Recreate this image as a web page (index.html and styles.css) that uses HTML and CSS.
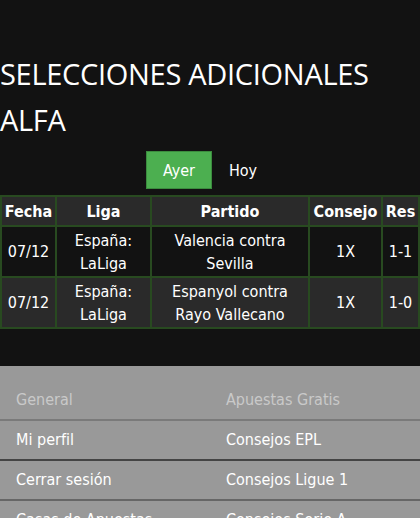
FILE: index.html
```html
<!DOCTYPE html>
<html lang="es">
<head>
<meta charset="utf-8">
<link rel="stylesheet" href="styles.css">
</head>
<body>
<main class="page">
  <h1 class="title">SELECCIONES ADICIONALES ALFA</h1>
  <div class="tabs">
    <button class="tab active">Ayer</button>
    <button class="tab">Hoy</button>
  </div>
  <table class="tips">
    <thead>
      <tr><th>Fecha</th><th>Liga</th><th>Partido</th><th>Consejo</th><th>Res</th></tr>
    </thead>
    <tbody>
      <tr class="odd"><td>07/12</td><td>España:<br>LaLiga</td><td>Valencia contra<br>Sevilla</td><td>1X</td><td>1-1</td></tr>
      <tr class="even"><td>07/12</td><td>España:<br>LaLiga</td><td>Espanyol contra<br>Rayo Vallecano</td><td>1X</td><td>1-0</td></tr>
    </tbody>
  </table>
</main>
<footer class="footer">
  <ul class="col">
    <li class="head">General</li>
    <li class="b-dark">Mi perfil</li>
    <li class="b-mid">Cerrar sesión</li>
    <li>Casas de Apuestas</li>
  </ul>
  <ul class="col">
    <li class="head">Apuestas Gratis</li>
    <li class="b-dark">Consejos EPL</li>
    <li class="b-mid">Consejos Ligue 1</li>
    <li>Consejos Serie A</li>
  </ul>
</footer>
</body>
</html>
```
FILE: styles.css
```css
html, body {
  margin: 0;
  padding: 0;
  background: #121212;
  color: #fff;
  overflow: hidden;
}
.page {
  padding-top: 51px;
  padding-bottom: 37px;
}
.title {
  margin: 0 0 8px 0;
  font-family: "Open Sans", sans-serif;
  font-weight: 400;
  font-size: 29px;
  line-height: 46px;
  letter-spacing: -0.3px;
}
.tabs {
  display: flex;
  justify-content: center;
  margin-bottom: 6px;
}
.tab {
  font-family: "DejaVu Sans Condensed", "DejaVu Sans", sans-serif;
  font-size: 16px;
  color: #fff;
  background: transparent;
  border: 1px solid transparent;
  height: 38px;
  padding: 0 16px;
  margin: 0;
}
.tab.active {
  background: #4caf50;
  border-color: #3b8c3e;
  width: 66px;
}
.tips {
  width: 100%;
  border-collapse: collapse;
  font-family: "DejaVu Sans Condensed", "DejaVu Sans", sans-serif;
  font-size: 16px;
  text-align: center;
}
.tips th, .tips td {
  border: 2px solid #284a20;
  padding: 0;
}
.tips th {
  background: #2a2a2a;
  font-weight: bold;
  height: 28px;
}
.tips td {
  line-height: 23px;
  height: 49px;
}
.tips th:nth-child(1) { width: 53px; }
.tips th:nth-child(2) { width: 93px; }
.tips th:nth-child(3) { width: 156px; }
.tips th:nth-child(4) { width: 71px; }
.tips tr.odd td { background: #121212; }
.tips tr.even td { background: #2a2a2a; }
.footer {
  background: #999;
  display: grid;
  grid-template-columns: 210px 210px;
  padding-top: 15px;
}
.col {
  list-style: none;
  margin: 0;
  padding: 0;
  font-family: "DejaVu Sans Condensed", "DejaVu Sans", sans-serif;
  font-size: 16px;
}
.col li {
  padding: 0 16px;
  height: 38px;
  line-height: 38px;
  border-bottom: 2px solid #7a7a7a;
  white-space: nowrap;
}
.col li.head { color: #c9c9c9; }
.col li.b-dark { border-bottom-color: #444; }
.col li.b-mid { border-bottom-color: #666; }
```
